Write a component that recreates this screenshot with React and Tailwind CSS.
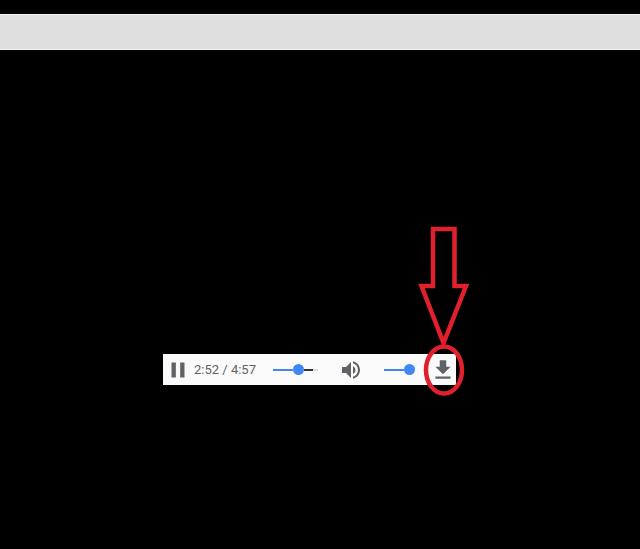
import { MdPause, MdVolumeUp, MdFileDownload } from 'react-icons/md';

function Slider({ fill, rest, width }) {
  return (
    <div className="flex items-center" style={{ width }}>
      <div className="h-[2px] bg-[#4285f4]" style={{ width: fill }} />
      <div className="h-[11px] w-[11px] shrink-0 rounded-full bg-[#4285f4]" />
      {rest > 0 && (
        <div className="flex h-[2px]" style={{ width: rest }}>
          <div className="h-full w-2/3 bg-[#333333]" />
          <div className="h-full w-1/3 bg-[#dddddd]" />
        </div>
      )}
    </div>
  );
}

export default function App() {
  return (
    <div className="relative h-[549px] w-[640px] overflow-hidden bg-black font-['Roboto','Liberation_Sans',sans-serif]">
      <div className="mt-[14px] h-[36px] w-full border-y border-[#f2f2f2] bg-[#dfdfdf]" />

      <div className="mt-[304px] ml-[163px] flex h-[31px] w-[293px] items-center bg-[#fafafa] text-[#5f6368]">
        <MdPause size={26} className="ml-[2px] shrink-0" />
        <span className="ml-[3px] w-[68px] shrink-0 text-[13px] whitespace-nowrap">2:52 / 4:57</span>
        <div className="ml-[11px]">
          <Slider fill={20} rest={14} width={45} />
        </div>
        <MdVolumeUp size={24} className="ml-[21px] shrink-0" />
        <div className="ml-[21px]">
          <Slider fill={20} rest={0} width={31} />
        </div>
        <MdFileDownload size={26} className="ml-[15px] shrink-0" />
      </div>

      {/* red annotation drawn over the screenshot */}
      <svg className="absolute top-0 left-0" width="640" height="549" fill="none" stroke="#e0202c">
        <path d="M433 229H454.500V286H466L443.500 343L421.500 286H433Z" strokeWidth="4.500" strokeLinejoin="miter" />
        <ellipse cx="444" cy="370" rx="18" ry="23.500" strokeWidth="4.500" />
      </svg>
    </div>
  );
}
